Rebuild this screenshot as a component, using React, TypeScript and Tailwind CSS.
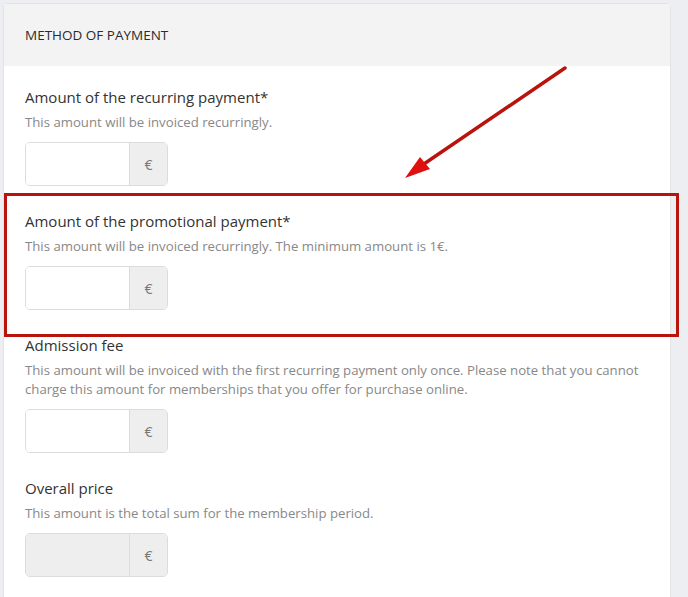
import React from "react";

type Field = {
  label: string;
  description: string;
  disabled?: boolean;
};

const fields: Field[] = [
  {
    label: "Amount of the recurring payment*",
    description: "This amount will be invoiced recurringly.",
  },
  {
    label: "Amount of the promotional payment*",
    description:
      "This amount will be invoiced recurringly. The minimum amount is 1€.",
  },
  {
    label: "Admission fee",
    description:
      "This amount will be invoiced with the first recurring payment only once. Please note that you cannot charge this amount for memberships that you offer for purchase online.",
  },
  {
    label: "Overall price",
    description: "This amount is the total sum for the membership period.",
    disabled: true,
  },
];

const EuroInput: React.FC<{ disabled?: boolean }> = ({ disabled }) => (
  <div className="mt-[10px] flex h-[44px] w-[143px] overflow-hidden rounded-[5px] border border-[#dcdcdc]">
    <input
      disabled={disabled}
      className={`h-full w-[103px] px-2 text-[14px] outline-none ${
        disabled ? "bg-[#eeeeee]" : "bg-white"
      }`}
    />
    <div className="flex flex-1 items-center justify-center border-l border-[#dcdcdc] bg-[#eeeeee] text-[14px] text-[#777]">
      €
    </div>
  </div>
);

const App: React.FC = () => {
  return (
    <div className="relative h-[597px] w-[688px] overflow-hidden bg-[#eceef2] font-['Open_Sans',sans-serif]">
      <div className="ml-[3px] mt-[3px] h-[600px] w-[668px] rounded-t-[4px] border border-[#e2e3e6] bg-white">
        <div className="flex h-[62px] items-center bg-[#f3f3f3] px-[21px]">
          <span className="text-[13.5px] font-medium uppercase text-[#2b2b2b]">
            Method of payment
          </span>
        </div>

        <div className="flex flex-col gap-[25px] pl-[21px] pt-[21px]">
          {fields.map((field) => (
            <div key={field.label} className="flex flex-col">
              <div className="text-[15px] leading-[21px] text-[#333]">
                {field.label}
              </div>
              <p className="mt-[5px] text-[13.2px] leading-[19px] text-[#888]">
                {field.description}
              </p>
              <EuroInput disabled={field.disabled} />
            </div>
          ))}
        </div>
      </div>

      {/* annotation: highlight box */}
      <div className="pointer-events-none absolute left-[4px] top-[193px] h-[144px] w-[675px] border-[3px] border-[#b8140c]" />

      {/* annotation: arrow */}
      <svg
        className="pointer-events-none absolute left-0 top-0"
        width="688"
        height="597"
        viewBox="0 0 688 597"
      >
        <line
          x1="565"
          y1="68"
          x2="418"
          y2="168"
          stroke="#b8140c"
          strokeWidth="3.5"
          strokeLinecap="round"
        />
        <polygon points="405,178 420,157 430,169" fill="#e01010" />
      </svg>
    </div>
  );
};

export default App;
